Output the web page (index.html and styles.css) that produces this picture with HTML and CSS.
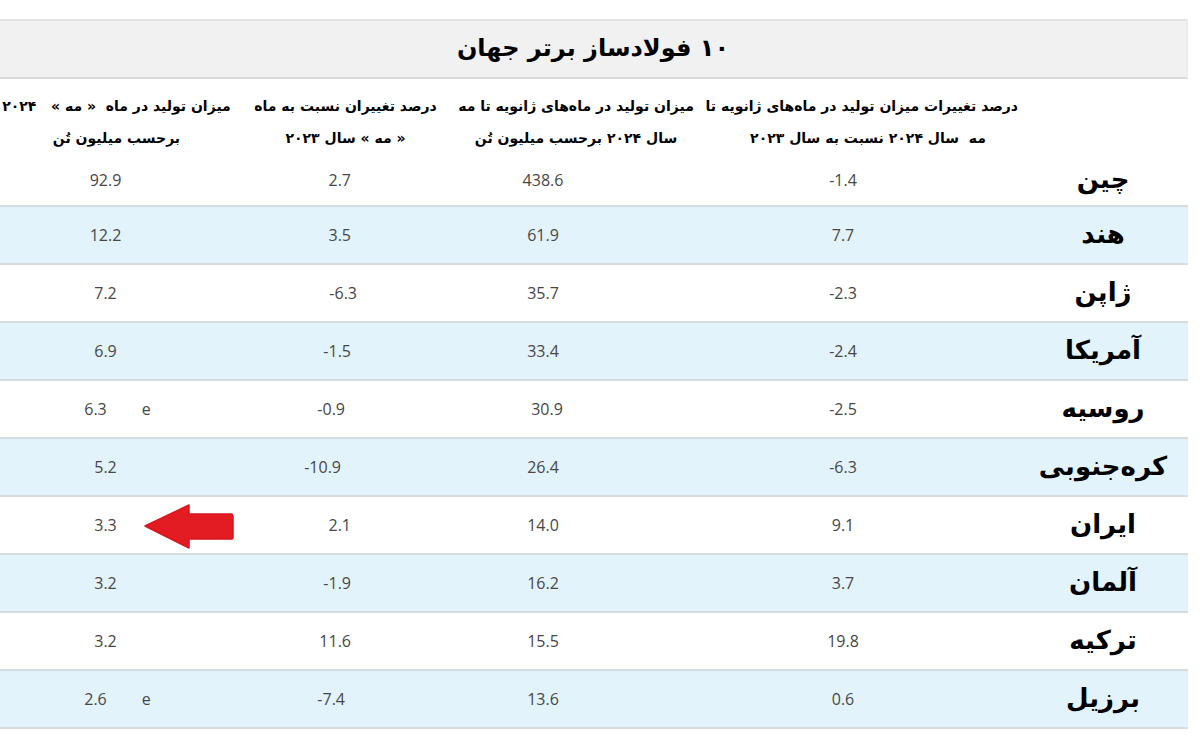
FILE: index.html
```html
<!DOCTYPE html>
<html lang="fa" dir="rtl">
<head>
<meta charset="utf-8">
<title>۱۰ فولادساز برتر جهان</title>
<link rel="stylesheet" href="styles.css">
</head>
<body>
<div class="page">
  <div class="title-bar">۱۰ فولادساز برتر جهان</div>
  <table class="steel">
    <colgroup>
      <col class="c-country">
      <col class="c4">
      <col class="c3">
      <col class="c2">
      <col class="c1">
    </colgroup>
    <thead>
      <tr class="head">
        <th></th>
        <th class="h4">درصد تغییرات میزان تولید در ماه‌های ژانویه تا<br>مه&nbsp; سال ۲۰۲۴ نسبت به سال ۲۰۲۳</th>
        <th class="h3">میزان تولید در ماه‌های ژانویه تا مه<br>سال ۲۰۲۴ برحسب میلیون تُن</th>
        <th class="h2">درصد تغییران نسبت به ماه<br>« مه » سال ۲۰۲۳</th>
        <th class="h1">میزان تولید در ماه&nbsp; « مه »&nbsp;&nbsp; ۲۰۲۴<br>برحسب میلیون تُن</th>
      </tr>
    </thead>
    <tbody>
      <tr class="first">
        <td class="country">چین</td>
        <td class="val v4">-1.4</td>
        <td class="val v3">438.6</td>
        <td class="val v2">2.7</td>
        <td class="val v1">92.9</td>
      </tr>
      <tr class="alt">
        <td class="country">هند</td>
        <td class="val v4">7.7</td>
        <td class="val v3">61.9</td>
        <td class="val v2">3.5</td>
        <td class="val v1">12.2</td>
      </tr>
      <tr>
        <td class="country">ژاپن</td>
        <td class="val v4">-2.3</td>
        <td class="val v3">35.7</td>
        <td class="val v2 nudge-r">-6.3</td>
        <td class="val v1">7.2</td>
      </tr>
      <tr class="alt">
        <td class="country">آمریکا</td>
        <td class="val v4">-2.4</td>
        <td class="val v3">33.4</td>
        <td class="val v2">-1.5</td>
        <td class="val v1">6.9</td>
      </tr>
      <tr>
        <td class="country">روسیه</td>
        <td class="val v4">-2.5</td>
        <td class="val v3 sh-r">30.9</td>
        <td class="val v2 nudge-l">-0.9</td>
        <td class="val v1"><span class="num">6.3</span><span class="note">e</span></td>
      </tr>
      <tr class="alt">
        <td class="country">کره‌جنوبی</td>
        <td class="val v4">-6.3</td>
        <td class="val v3">26.4</td>
        <td class="val v2 nudge-l2">-10.9</td>
        <td class="val v1">5.2</td>
      </tr>
      <tr>
        <td class="country">ایران</td>
        <td class="val v4">9.1</td>
        <td class="val v3">14.0</td>
        <td class="val v2">2.1</td>
        <td class="val v1 marked">3.3<svg class="arrow" width="92" height="48" viewBox="0 0 92 48" aria-hidden="true"><path d="M2 24 L46 3 L46 12 L89 12 L90 14 L90 36 L89 37 L46 37 L46 46 Z" fill="#e31b23" stroke="#d8161e" stroke-width="1.5" stroke-linejoin="round"/></svg></td>
      </tr>
      <tr class="alt">
        <td class="country">آلمان</td>
        <td class="val v4">3.7</td>
        <td class="val v3">16.2</td>
        <td class="val v2">-1.9</td>
        <td class="val v1">3.2</td>
      </tr>
      <tr>
        <td class="country">ترکیه</td>
        <td class="val v4">19.8</td>
        <td class="val v3">15.5</td>
        <td class="val v2">11.6</td>
        <td class="val v1">3.2</td>
      </tr>
      <tr class="alt">
        <td class="country">برزیل</td>
        <td class="val v4">0.6</td>
        <td class="val v3">13.6</td>
        <td class="val v2 nudge-l">-7.4</td>
        <td class="val v1"><span class="num">2.6</span><span class="note">e</span></td>
      </tr>
    </tbody>
  </table>
</div>
</body>
</html>
```

FILE: styles.css
```css
html, body {
  margin: 0;
  padding: 0;
  background: #ffffff;
}

.page {
  width: 1188px;
  margin-left: 0;
  margin-right: auto;
  padding-top: 19px;
  font-family: "DejaVu Sans", "Noto Sans", sans-serif;
  color: #000;
}

.title-bar {
  box-sizing: border-box;
  height: 60px;
  background: #f1f1f1;
  border-top: 2px solid #e2e2e2;
  border-bottom: 2px solid #dadada;
  border-right: 2px solid #ececec;
  display: flex;
  align-items: center;
  justify-content: center;
  font-weight: bold;
  font-size: 24px;
  letter-spacing: -0.6px;
  padding-bottom: 2px;
}

.steel {
  width: 1188px;
  border-collapse: collapse;
  table-layout: fixed;
}

.c-country { width: 170px; }
.c4 { width: 310px; }
.c3 { width: 250px; }
.c2 { width: 225px; }
.c1 { width: 233px; }

.head th {
  font-weight: bold;
  font-size: 14px;
  line-height: 32px;
  padding: 11px 0 0 0;
  height: 65px;
  vertical-align: top;
  text-align: center;
  letter-spacing: -0.5px;
  white-space: nowrap;
}

.head .h4 { padding-left: 10px; }
.head .h3 { padding-right: 14px; }

tbody td {
  height: 54px;
  padding: 0;
  border-bottom: 2px solid #d6dbde;
  text-align: center;
  vertical-align: middle;
  font-family: "Open Sans", "DejaVu Sans", sans-serif;
  font-size: 16px;
  color: #474747;
}

tbody tr.first td {
  height: 48px;
}

tbody tr.alt td {
  background: #e3f3fc;
}

tbody td.country {
  font-family: "DejaVu Sans", sans-serif;
  font-weight: bold;
  font-size: 26px;
  color: #000;
  letter-spacing: -0.5px;
  padding-bottom: 2px;
}

tbody td.val {
  direction: ltr;
}

.v4 { padding-right: 40px; }
.v3 { padding-right: 80px; }
.v1 { padding-right: 22px; }

tbody td.v2 {
  text-align: right;
  padding-right: 107px;
}

tbody td.v2.nudge-r { padding-right: 101px; }
tbody td.v2.nudge-l { padding-right: 113px; }
tbody td.v2.nudge-l2 { padding-right: 117px; }
tbody td.v3.sh-r { padding-right: 72px; }

.val .num {
  display: inline-block;
}

.val .note {
  display: inline-block;
  width: 20px;
  text-align: left;
  text-indent: 35px;
  white-space: nowrap;
}

.marked {
  position: relative;
}

.arrow {
  position: absolute;
  left: 143px;
  top: 5px;
}
```
